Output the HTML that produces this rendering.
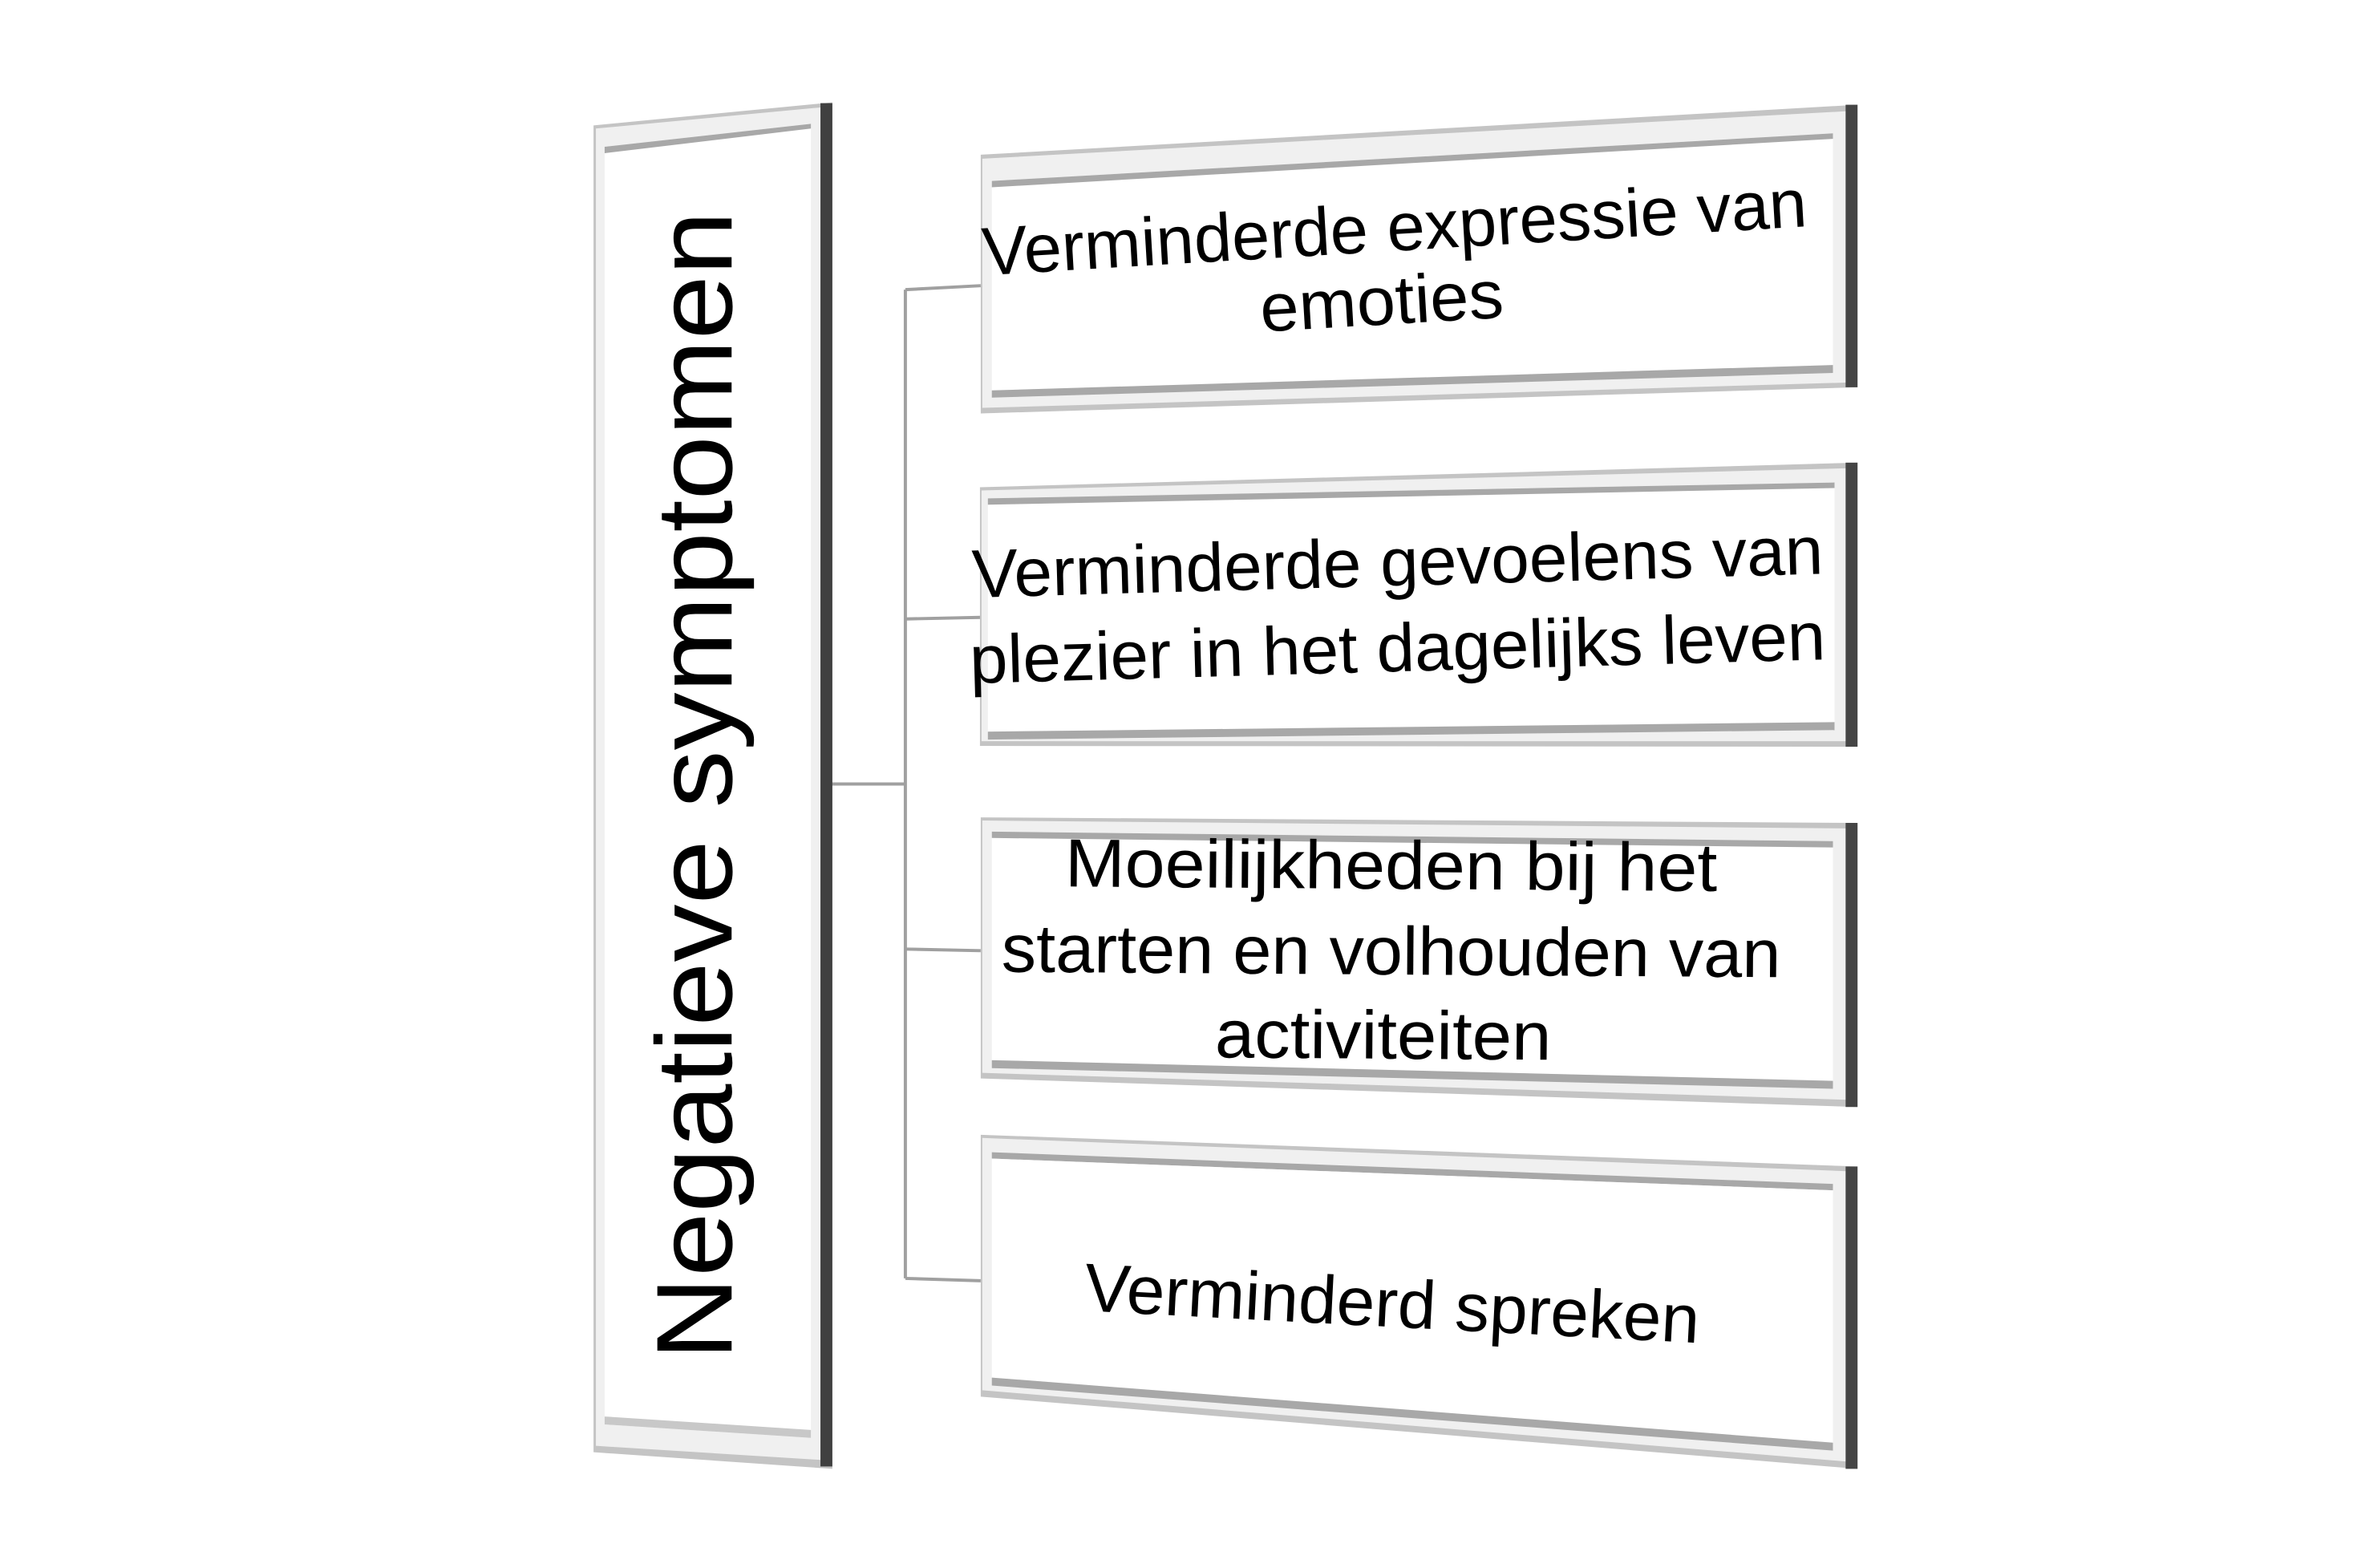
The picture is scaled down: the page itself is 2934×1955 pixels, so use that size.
<!DOCTYPE html>
<html><head><meta charset="utf-8"><style>
html,body{margin:0;padding:0;background:#fff;}
svg{display:block;}
text{font-family:"Liberation Sans",sans-serif;fill:#000;}
</style></head><body>
<svg width="2934" height="1955" viewBox="0 0 2934 1955" xmlns="http://www.w3.org/2000/svg">
<g transform="scale(0.9894)">
<g stroke="#a0a0a0" stroke-width="4" fill="none">
<line x1="1045" y1="988" x2="1141" y2="988"/>
<line x1="1141" y1="365" x2="1141" y2="1611"/>
<line x1="1141" y1="365" x2="1236" y2="360"/>
<line x1="1141" y1="780" x2="1236" y2="778"/>
<line x1="1141" y1="1196" x2="1236" y2="1198"/>
<line x1="1141" y1="1611" x2="1236" y2="1614"/>
</g>
<polygon points="748,158 1049,129 1049,1851 748,1830" fill="#c4c4c4"/>
<polygon points="751,162 1038,135 1038,1840 751,1822" fill="#f0f0f0"/>
<polygon points="762,185 1022,156 1022,1812 762,1795" fill="#ffffff"/>
<polygon points="762,185 1022,156 1022,162 762,193" fill="#a8a8a8"/>
<polygon points="762,1795 1022,1812 1022,1802 762,1785" fill="#c8c8c8"/>
<rect x="1034" y="130" width="15" height="1718" fill="#404040"/>
<text transform="translate(922,990) rotate(-90)" text-anchor="middle" font-size="136" textLength="1448" lengthAdjust="spacingAndGlyphs">Negatieve symptomen</text>

<g>
<polygon points="1236,195 2341,132 2341,488 1236,521" fill="#c4c4c4"/>
<polygon points="1238,200 2330,140 2330,482 1238,514" fill="#f0f0f0"/>
<polygon points="1250,228 2310,168 2310,460 1250,492" fill="#fff"/>
<polygon points="1250,228 2310,168 2310,175 1250,236" fill="#a8a8a8"/>
<polygon points="1250,492 2310,460 2310,470 1250,501" fill="#a8a8a8"/>
<rect x="2326" y="132" width="15" height="356" fill="#454545"/>
<text transform="translate(1759,316) rotate(-3.4)" text-anchor="middle" font-size="86" textLength="1041" lengthAdjust="spacingAndGlyphs">Verminderde expressie van</text>
<text transform="translate(1743,409) rotate(-3.4)" text-anchor="middle" font-size="86" textLength="307" lengthAdjust="spacingAndGlyphs">emoties</text>
</g>

<g>
<polygon points="1235,614 2341,583 2341,941 1235,940" fill="#c4c4c4"/>
<polygon points="1237,618 2330,590 2330,934 1237,934" fill="#f0f0f0"/>
<polygon points="1245,628 2312,608 2312,910 1245,922" fill="#fff"/>
<polygon points="1245,628 2312,608 2312,615 1245,636" fill="#a8a8a8"/>
<polygon points="1245,922 2312,910 2312,920 1245,932" fill="#a8a8a8"/>
<rect x="2326" y="583" width="15" height="358" fill="#454545"/>
<text transform="translate(1762,738) rotate(-1.6)" text-anchor="middle" font-size="86" textLength="1073" lengthAdjust="spacingAndGlyphs">Verminderde gevoelens van</text>
<text transform="translate(1762,846) rotate(-1.6)" text-anchor="middle" font-size="86" textLength="1079" lengthAdjust="spacingAndGlyphs">plezier in het dagelijks leven</text>
</g>

<g>
<polygon points="1236,1030 2341,1037 2341,1395 1236,1359" fill="#c4c4c4"/>
<polygon points="1238,1034 2330,1044 2330,1386 1238,1352" fill="#f0f0f0"/>
<polygon points="1250,1048 2310,1060 2310,1362 1250,1336" fill="#fff"/>
<polygon points="1250,1048 2310,1060 2310,1068 1250,1056" fill="#a8a8a8"/>
<polygon points="1250,1336 2310,1362 2310,1372 1250,1346" fill="#a8a8a8"/>
<rect x="2326" y="1037" width="15" height="358" fill="#454545"/>
<text transform="translate(1753,1120) rotate(0.4)" text-anchor="middle" font-size="86" textLength="822" lengthAdjust="spacingAndGlyphs">Moeilijkheden bij het</text>
<text transform="translate(1753,1228) rotate(0.4)" text-anchor="middle" font-size="86" textLength="982" lengthAdjust="spacingAndGlyphs">starten en volhouden van</text>
<text transform="translate(1743,1334) rotate(0.4)" text-anchor="middle" font-size="86" textLength="424" lengthAdjust="spacingAndGlyphs">activiteiten</text>
</g>

<g>
<polygon points="1236,1430 2341,1470 2341,1851 1236,1760" fill="#c4c4c4"/>
<polygon points="1238,1434 2330,1476 2330,1842 1238,1752" fill="#f0f0f0"/>
<polygon points="1250,1452 2310,1492 2310,1500 1250,1460" fill="#a8a8a8"/>
<polygon points="1250,1460 2310,1500 2310,1818 1250,1736" fill="#fff"/>
<polygon points="1250,1736 2310,1818 2310,1828 1250,1746" fill="#a8a8a8"/>
<rect x="2326" y="1470" width="15" height="381" fill="#454545"/>
<text transform="translate(1753,1672) rotate(3)" text-anchor="middle" font-size="86" textLength="776" lengthAdjust="spacingAndGlyphs">Verminderd spreken</text>
</g>
</g>
</svg>
</body></html>
